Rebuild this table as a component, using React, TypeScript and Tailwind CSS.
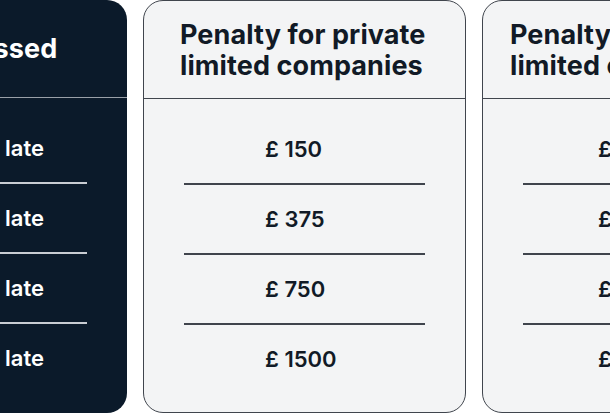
const columns = [
  {
    title: "Deadline passed",
    rows: ["Up to 1 month late", "1 to 3 months late", "3 to 6 months late", "Over 6 months late"],
    dark: true,
    headPad: "pl-[33px]",
    rowPad: "justify-end pr-[83px]",
  },
  {
    title: "Penalty for private limited companies",
    rows: ["£ 150", "£ 375", "£ 750", "£ 1500"],
    dark: false,
    headPad: "pl-[36px] pr-[20px]",
    rowPad: "pl-[121px]",
  },
  {
    title: "Penalty for public limited companies",
    rows: ["£ 750", "£ 1500", "£ 3000", "£ 7500"],
    dark: false,
    headPad: "pl-[27px] pr-[20px]",
    rowPad: "pl-[115px]",
  },
];

function Column({ col }: { col: (typeof columns)[number] }) {
  const line = col.dark ? "bg-[#c9cdd3]" : "bg-[#3f444c]";
  return (
    <div
      className={
        col.dark
          ? "w-[323px] h-[413px] shrink-0 rounded-[20px] bg-[#0b1a2a] text-white flex flex-col overflow-hidden"
          : "w-[323px] h-[413px] shrink-0 rounded-[20px] bg-[#f3f4f5] text-[#111a26] border-[1.5px] border-[#40454d] flex flex-col overflow-hidden"
      }
    >
      <div
        className={`h-[98px] shrink-0 flex items-center border-b-[1.5px] ${col.dark ? "border-[#9aa0a8]" : "border-[#40454d]"} ${col.headPad}`}
      >
        <h2 className="text-[27px] leading-[31px] font-bold tracking-[0.1px] whitespace-nowrap">
          {col.title.includes("limited") ? (
            <>
              {col.title.replace(/ limited companies$/, "")}
              <br />
              limited companies
            </>
          ) : (
            col.title
          )}
        </h2>
      </div>
      <div className="pt-[16px] flex flex-col">
        {col.rows.map((r, i) => (
          <div key={r}>
            {i > 0 && <div className={`mx-[40px] h-[2px] ${line}`} />}
            <div className={`h-[68px] flex items-center whitespace-nowrap text-[22px] font-semibold ${col.rowPad}`}>
              {r}
            </div>
          </div>
        ))}
      </div>
    </div>
  );
}

export default function App() {
  return (
    <div className="w-[610px] h-[414px] overflow-hidden bg-white" style={{ fontFamily: "Inter, 'Liberation Sans', sans-serif" }}>
      <div className="flex gap-[16px] ml-[-196px]">
        {columns.map((c) => (
          <Column key={c.title} col={c} />
        ))}
      </div>
    </div>
  );
}
